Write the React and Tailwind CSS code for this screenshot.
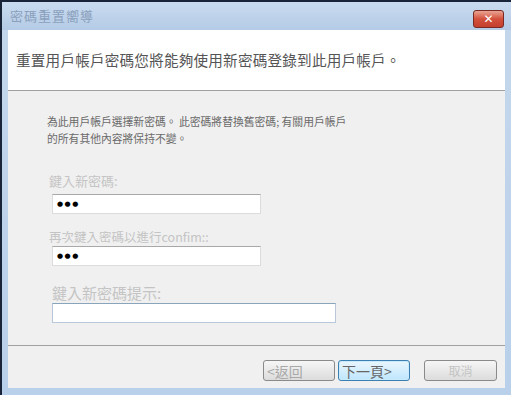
export default function App() {
  const cjk = { fontFamily: '"Noto Sans CJK TC", "Noto Sans", sans-serif' };
  const dots = { fontFamily: '"DejaVu Sans", sans-serif' };
  return (
    <div className="w-[511px] h-[395px] bg-[#1a2438] pt-[2px] pl-[2px] overflow-hidden" style={cjk}>
      <div className="w-[509px] h-[393px] bg-gradient-to-b from-[#c4d7ec] to-[#b9d0ea] flex flex-col">
        {/* Title bar */}
        <div className="h-[28px] flex items-center justify-between pl-[8px] pr-[7px] bg-gradient-to-b from-[#c9dbef] to-[#b4cbe6]">
          <span className="text-[13px] text-[#8aa0bc] tracking-[1px]">密碼重置嚮導</span>
          <div className="w-[31px] h-[18px] rounded-[3px] border border-[#7a2a22] bg-gradient-to-b from-[#e9a394] via-[#d2503c] to-[#c3402c] flex items-center justify-center mt-[6px]">
            <span className="text-white text-[12px] font-bold leading-none" style={dots}>✕</span>
          </div>
        </div>
        <div className="flex flex-col ml-[6px] mr-[6px]">
          {/* White header */}
          <div className="h-[60px] bg-white flex items-center pl-[8px]">
            <span className="text-[14.6px] text-[#555] tracking-[0.2px]">重置用戶帳戶密碼您將能夠使用新密碼登錄到此用戶帳戶。</span>
          </div>
          <div className="h-[1px] bg-[#a0a0a0]" />
          {/* Content */}
          <div className="h-[254px] bg-[#f0f0f0] flex flex-col pl-[39px] pt-[22px]">
            <div className="text-[10.8px] leading-[17px] text-[#6a6a6a]">
              <div className="whitespace-nowrap">為此用戶帳戶選擇新密碼。&nbsp;此密碼將替換舊密碼;&nbsp;有關用戶帳戶</div>
              <div>的所有其他內容將保持不變。</div>
            </div>
            <div className="mt-[25px] text-[13px] leading-[18px] text-[#c4c4c4] pl-[2px]">鍵入新密碼:</div>
            <div className="mt-[4px] ml-[5px] w-[209px] h-[20px] bg-white border border-[#dcdcdc] border-t-[#a8a8a8] flex items-center pl-[4px]">
              <span className="text-[7px] text-black tracking-[1.5px] leading-none" style={dots}>●●●</span>
            </div>
            <div className="mt-[14px] text-[12.5px] leading-[18px] text-[#c4c4c4] pl-[2px]">再次鍵入密碼以進行confim::</div>
            <div className="ml-[5px] w-[209px] h-[20px] bg-white border border-[#dcdcdc] border-t-[#a8a8a8] flex items-center pl-[4px]">
              <span className="text-[7px] text-black tracking-[1.5px] leading-none" style={dots}>●●●</span>
            </div>
            <div className="mt-[17px] text-[15px] leading-[20px] text-[#c4c4c4] pl-[5px]">鍵入新密碼提示:</div>
            <div className="ml-[5px] w-[284px] h-[20px] bg-white border border-[#b8c8d8] border-t-[#8aa4bc]" />
          </div>
          <div className="h-[1px] bg-[#a0a0a0]" />
          {/* Buttons */}
          <div className="h-[42px] bg-[#f0f0f0] flex items-start justify-end pt-[14px] pr-[8px] gap-[3px]">
            <div className="w-[72px] h-[21px] rounded-[3px] border border-[#8a8a8a] bg-gradient-to-b from-[#f6f6f6] to-[#dcdcdc] flex items-center pl-[3px] text-[14px] text-[#a8a8a8] leading-none">&lt;返回</div>
            <div className="w-[72px] h-[21px] rounded-[3px] border border-[#3c7fb1] bg-gradient-to-b from-[#eaf6fd] to-[#bee6fd] flex items-center pl-[3px] text-[14px] text-[#666] leading-none shadow-[inset_0_0_0_1px_#c8eafc]">下一頁&gt;</div>
            <div className="ml-[11px] w-[73px] h-[21px] rounded-[3px] border border-[#8a8a8a] bg-gradient-to-b from-[#f6f6f6] to-[#dcdcdc] flex items-center justify-center text-[12px] text-[#c4c4c4] leading-none">取消</div>
          </div>
        </div>
        <div className="flex-1" />
      </div>
    </div>
  );
}
